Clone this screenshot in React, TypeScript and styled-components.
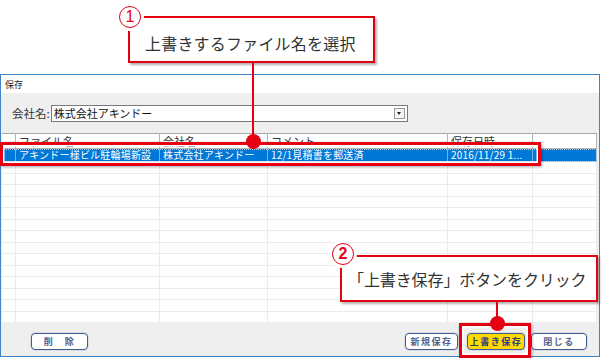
import styled, { createGlobalStyle } from "styled-components";

const GlobalStyle = createGlobalStyle`
    body {
        margin: 0;
        background: #ffffff;
        font-family: "Noto Sans CJK JP", "Noto Sans", sans-serif;
    }
`;

const RED = "#e50012";

const Page = styled.div`
    position: relative;
    width: 603px;
    height: 358px;
    overflow: hidden;
    background: #ffffff;
`;

const Window = styled.div`
    margin-top: 74px;
    width: 600px;
    height: 283px;
    box-sizing: border-box;
    border: 1px solid #3f86c8;
    background: #efefef;
    display: flex;
    flex-direction: column;
`;

const TitleBar = styled.div`
    height: 18px;
    background: #ffffff;
    display: flex;
    align-items: center;
    padding-left: 4px;
    font-size: 9px;
    color: #222;
`;

const CompanyRow = styled.div`
    height: 40px;
    display: flex;
    align-items: center;
    padding-left: 11px;
    gap: 1px;
`;

const Label = styled.span`
    font-size: 11.5px;
    color: #333;
`;

const Select = styled.div`
    width: 357px;
    height: 17px;
    box-sizing: border-box;
    border: 1px solid #7a7a7a;
    background: #ffffff;
    display: flex;
    align-items: center;
    justify-content: space-between;
    padding: 0 2px 0 2px;
    font-size: 11px;
    color: #111;
`;

const Arrow = styled.div`
    width: 11px;
    height: 11px;
    box-sizing: border-box;
    border: 1px solid #9a9a9a;
    background: #f4f4f4;
    display: flex;
    align-items: center;
    justify-content: center;
    &::after {
        content: "";
        border-left: 2.5px solid transparent;
        border-right: 2.5px solid transparent;
        border-top: 3px solid #222;
    }
`;

const Table = styled.div`
    margin: 0 2px 0 1px;
    height: 189px;
    background: #ffffff;
    border-top: 1px solid #a8a8a8;
    box-sizing: border-box;
    display: flex;
    flex-direction: column;
    overflow: hidden;
`;

const Row = styled.div<{ $h: number; $selected?: boolean; $header?: boolean }>`
    display: grid;
    grid-template-columns: 14px 144px 108px 180px 85px 1fr;
    height: ${p => p.$h}px;
    flex: none;
    background: ${p => (p.$selected ? "#0078d7" : "#ffffff")};
    color: ${p => (p.$selected ? "#ffffff" : "#333")};
    font-size: ${p => (p.$header ? "11px" : "10px")};
    letter-spacing: ${p => (p.$header ? "0" : "0.2px")};
    outline: ${p => (p.$selected ? "1px dotted rgba(255,255,255,0.6)" : "none")};
    outline-offset: -1px;
`;

const Cell = styled.div<{ $line: string }>`
    border-right: 1px solid ${p => p.$line};
    border-bottom: 1px solid ${p => p.$line};
    padding-left: 3px;
    white-space: nowrap;
    display: flex;
    align-items: center;
    line-height: 1;
`;

const Footer = styled.div`
    flex: 1;
    display: flex;
    align-items: center;
    padding: 4px 12px 0 30px;
`;

const Spacer = styled.div`
    flex: 1;
`;

const Button = styled.div<{ $w: number; $primary?: boolean; $gap?: number }>`
    width: ${p => p.$w}px;
    height: 17px;
    margin-left: ${p => p.$gap ?? 0}px;
    box-sizing: border-box;
    border: 1.5px solid #3f5b9c;
    border-radius: 4px;
    background: ${p => (p.$primary ? "#ffd900" : "#ffffff")};
    color: ${p => (p.$primary ? "#2b3f7c" : "#50628f")};
    display: flex;
    align-items: center;
    justify-content: center;
    font-size: 9px;
    font-weight: 700;
    letter-spacing: 1.5px;
    box-shadow: 0 0 0 1px #dcdcdc;
`;

/* annotations laid over the screenshot */

const CalloutBox = styled.div<{ $x: number; $y: number; $w: number; $h: number }>`
    position: absolute;
    left: ${p => p.$x}px;
    top: ${p => p.$y}px;
    width: ${p => p.$w}px;
    height: ${p => p.$h}px;
    box-sizing: border-box;
    border: 2px solid ${RED};
    background: #ffffff;
    box-shadow: 2px 2px 2px rgba(0, 0, 0, 0.3);
    font-size: 16px;
    color: #333;
    white-space: nowrap;
`;

const CalloutText = styled.div<{ $top: number; $left: number; $ls: number }>`
    margin-top: ${p => p.$top}px;
    margin-left: ${p => p.$left}px;
    letter-spacing: ${p => p.$ls}px;
    line-height: 1;
`;

const Num = styled.div<{ $x: number; $y: number; $bold?: boolean }>`
    position: absolute;
    left: ${p => p.$x - 11}px;
    top: ${p => p.$y - 11}px;
    width: 22px;
    height: 22px;
    box-sizing: border-box;
    border: 1.5px solid ${RED};
    border-radius: 50%;
    background: #ffffff;
    box-shadow: 0 0 0 3px #ffffff;
    color: ${RED};
    font-family: "Liberation Sans", sans-serif;
    font-weight: ${p => (p.$bold ? 700 : 400)};
    font-size: 16px;
    display: flex;
    align-items: center;
    justify-content: center;
    line-height: 1;
`;

const VLine = styled.div<{ $x: number; $y: number; $h: number }>`
    position: absolute;
    left: ${p => p.$x}px;
    top: ${p => p.$y}px;
    width: 2px;
    height: ${p => p.$h}px;
    background: ${RED};
`;

const Dot = styled.div<{ $x: number; $y: number }>`
    position: absolute;
    left: ${p => p.$x - 7}px;
    top: ${p => p.$y - 7}px;
    width: 15px;
    height: 15px;
    border-radius: 50%;
    background: ${RED};
`;

const Frame = styled.div<{ $x: number; $y: number; $w: number; $h: number }>`
    position: absolute;
    left: ${p => p.$x}px;
    top: ${p => p.$y}px;
    width: ${p => p.$w}px;
    height: ${p => p.$h}px;
    box-sizing: border-box;
    border: 3px solid ${RED};
    box-shadow: inset 0 0 0 1.5px #ffffff, 1px 1px 3px rgba(0, 0, 0, 0.35);
`;

const headers = ["", "ファイル名", "会社名", "コメント", "保存日時", ""];
const selected = ["", "アキンドー様ビル駐輪場新設", "株式会社アキンドー", "12/1見積書を郵送済", "2016/11/29 1...", ""];

const App = () => {
    const emptyRows = Array.from({ length: 14 });
    return (
        <Page>
            <GlobalStyle />
            <Window>
                <TitleBar>保存</TitleBar>
                <CompanyRow>
                    <Label>会社名:</Label>
                    <Select>
                        <span>株式会社アキンドー</span>
                        <Arrow />
                    </Select>
                </CompanyRow>
                <Table>
                    <Row $h={15} $header>
                        {headers.map((h, i) => (
                            <Cell key={i} $line="#b4b4b4">{h}</Cell>
                        ))}
                    </Row>
                    <Row $h={13} $selected>
                        {selected.map((s, i) => (
                            <Cell key={i} $line="rgba(255,255,255,0.45)">{s}</Cell>
                        ))}
                    </Row>
                    {emptyRows.map((_, r) => (
                        <Row key={r} $h={11.5}>
                            {headers.map((_, i) => (
                                <Cell key={i} $line="#ebebeb" />
                            ))}
                        </Row>
                    ))}
                </Table>
                <Footer>
                    <Button $w={57}>削　除</Button>
                    <Spacer />
                    <Button $w={53}>新規保存</Button>
                    <Button $w={58} $gap={9} $primary>上書き保存</Button>
                    <Button $w={56} $gap={6}>閉じる</Button>
                </Footer>
            </Window>

            {/* callout 1 */}
            <CalloutBox $x={128} $y={16} $w={247} $h={47}>
                <CalloutText $top={17} $left={15} $ls={0.2}>上書きするファイル名を選択</CalloutText>
            </CalloutBox>
            <Num $x={130} $y={17}>1</Num>
            <VLine $x={252} $y={62} $h={80} />
            <Frame $x={0} $y={142} $w={541} $h={24} />
            <Dot $x={253} $y={141} />

            {/* callout 2 */}
            <CalloutBox $x={340} $y={255} $w={258} $h={47}>
                <CalloutText $top={14} $left={6} $ls={-0.1}>「上書き保存」ボタンをクリック</CalloutText>
            </CalloutBox>
            <Num $x={343} $y={254} $bold>2</Num>
            <VLine $x={496} $y={301} $h={22} />
            <Frame $x={459} $y={323} $w={72} $h={35} />
            <Dot $x={497} $y={323} />
        </Page>
    );
};

export default App;
